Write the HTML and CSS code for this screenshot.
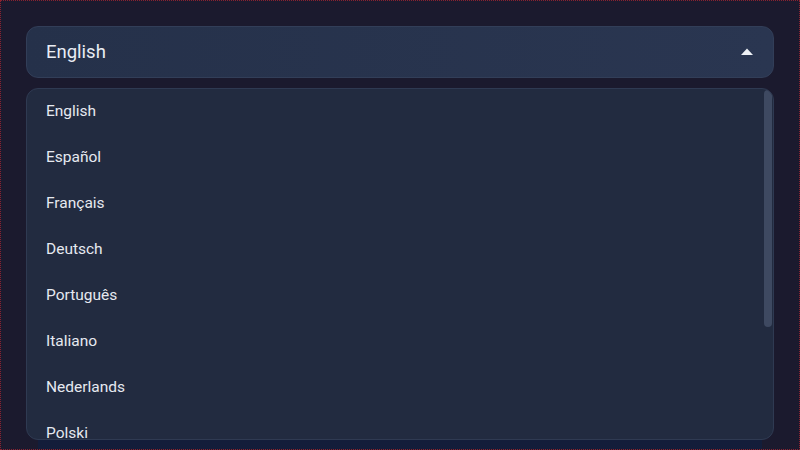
FILE: index.html
```html
<!DOCTYPE html>
<html lang="en">
<head>
<meta charset="utf-8">
<title>Language select</title>
<link rel="stylesheet" href="styles.css">
</head>
<body>
<div class="frame">
  <div class="select">
    <button class="trigger" type="button">
      <span class="value">English</span>
      <svg class="caret" width="12" height="7" viewBox="0 0 12 7"><path d="M0 7 L6 0.5 L12 7 Z" fill="#eef1f6"/></svg>
    </button>
    <div class="menu">
      <ul class="options">
        <li class="option">English</li>
        <li class="option">Español</li>
        <li class="option">Français</li>
        <li class="option">Deutsch</li>
        <li class="option">Português</li>
        <li class="option">Italiano</li>
        <li class="option">Nederlands</li>
        <li class="option">Polski</li>
        <li class="option">Русский</li>
        <li class="option">日本語</li>
        <li class="option">中文</li>
        <li class="option">한국어</li>
      </ul>
      <div class="thumb"></div>
    </div>
  </div>
  <div class="card"></div>
</div>
</body>
</html>
```
FILE: styles.css
```css
html, body {
  margin: 0;
  padding: 0;
  height: 100%;
}
body {
  background: #1b1a2e;
  font-family: Roboto, "Noto Sans", "Noto Sans CJK JP", sans-serif;
  overflow: hidden;
}
.frame {
  box-sizing: border-box;
  height: 450px;
  padding: 26px 26px 0;
  border: 1px dotted #8a2230;
  display: flex;
  flex-direction: column;
  gap: 22px;
}
.select {
  position: relative;
  margin: -1px -1px 0;
}
.trigger {
  box-sizing: border-box;
  width: 100%;
  height: 52px;
  display: flex;
  align-items: center;
  justify-content: space-between;
  padding: 0 20px 0 19px;
  background: linear-gradient(90deg, #25314a 0%, #2a3651 100%);
  border: 1px solid #323e58;
  border-radius: 12px;
  color: #e9edf4;
  font-family: inherit;
  font-size: 18.5px;
  cursor: pointer;
}
.caret {
  display: block;
  margin-top: -2px;
}
.menu {
  position: absolute;
  top: 62px;
  left: 0;
  right: 0;
  height: 352px;
  box-sizing: border-box;
  background: #222b40;
  border: 1px solid #2f3a52;
  border-radius: 12px;
  overflow: hidden;
  z-index: 2;
}
.options {
  margin: 0;
  padding: 0;
  list-style: none;
  height: 100%;
  overflow: hidden;
}
.thumb {
  position: absolute;
  top: 1px;
  right: 1px;
  width: 8px;
  height: 237px;
  background: #3e4961;
  border-radius: 4px;
}
.option {
  height: 46px;
  display: flex;
  align-items: center;
  padding-left: 19px;
  padding-bottom: 2px;
  box-sizing: border-box;
  font-size: 15.5px;
  color: #e6e9f0;
}
.card {
  flex: 1;
  margin: 0 11px;
  background: #131d3a;
}
```
